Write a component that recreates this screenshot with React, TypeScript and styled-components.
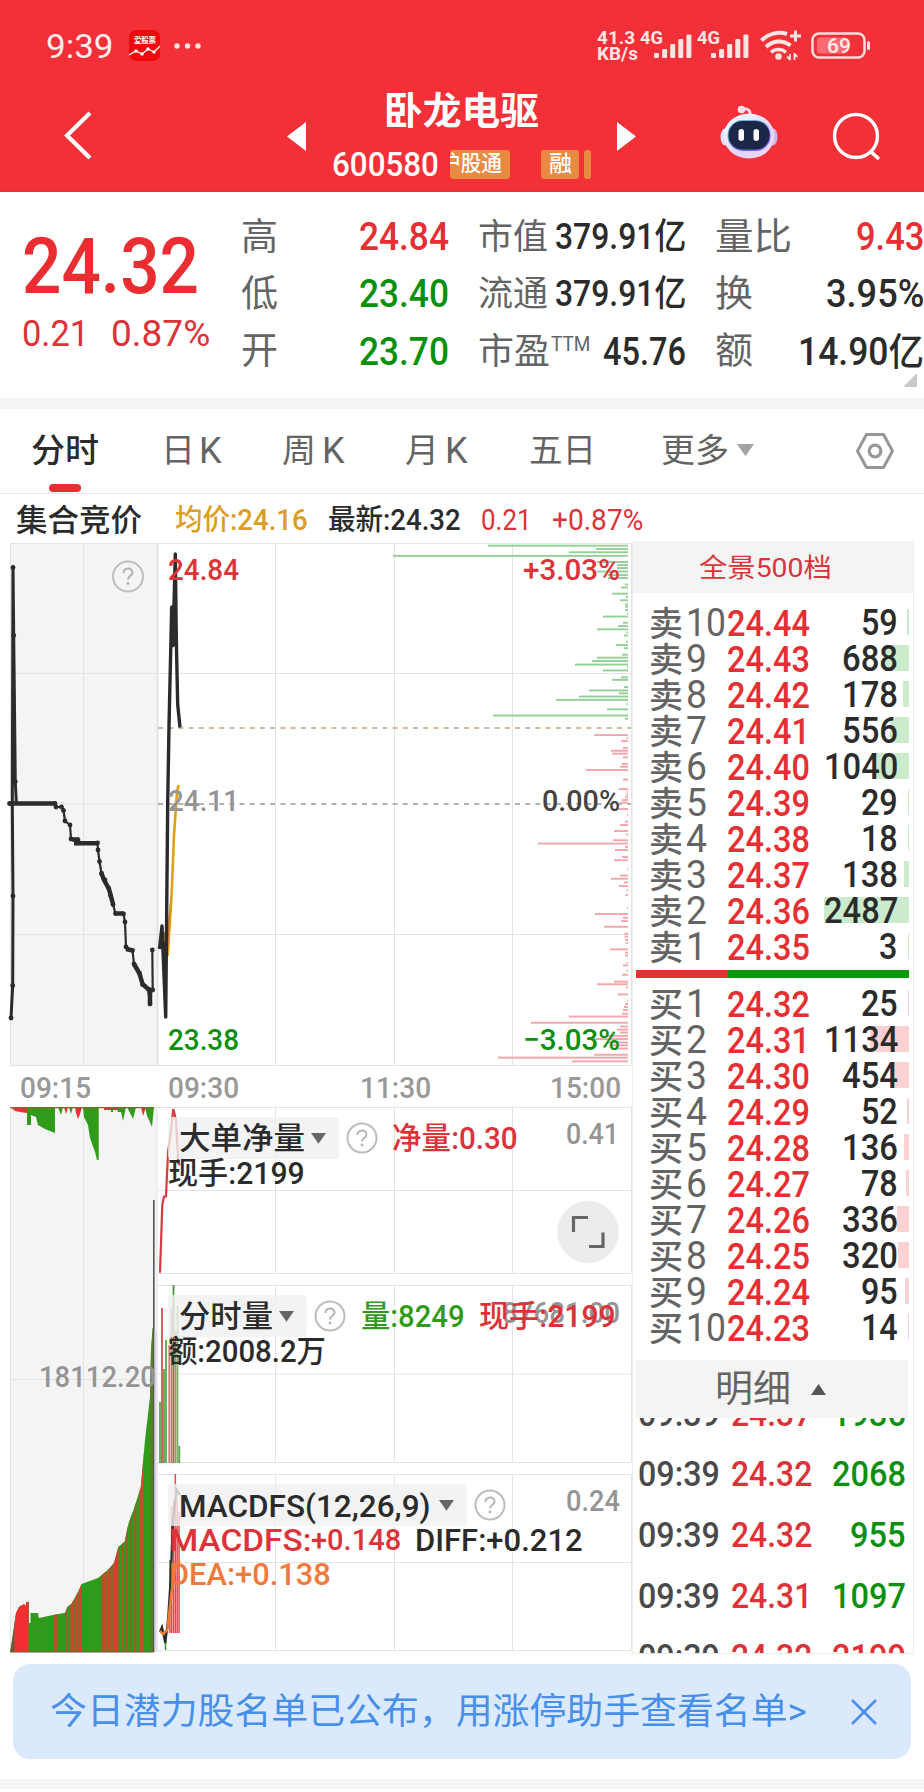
import React, { useLayoutEffect, useRef, useState } from 'react';
import styled, { createGlobalStyle } from 'styled-components';

const RED = '#e62e33';
const GREEN = '#0a900c';
const DARK = '#2b2b2b';
const GREY = '#646464';
const LIGHT = '#999';
const LINE = '#e3e3e3';
const FONT = `Roboto, "Noto Sans CJK SC", sans-serif`;

const Global = createGlobalStyle`
  * { box-sizing: border-box; }
  body { margin: 0; background: #fff; font-family: ${FONT}; overflow-x: hidden; }
  svg { display: block; flex: none; }
`;

/* ---------- text that is condensed to a given width ---------- */
interface TextStyle {
  $w: number;
  $size: number;
  $color?: string;
  $weight?: number;
  $ml?: number;
}
const FitBox = styled.span<TextStyle>`
  display: block;
  flex: none;
  width: ${p => p.$w}px;
  height: ${p => p.$size}px;
  margin-left: ${p => p.$ml ?? 0}px;
  font-size: ${p => p.$size}px;
  line-height: ${p => p.$size}px;
  color: ${p => p.$color ?? DARK};
  font-weight: ${p => p.$weight ?? 400};
`;
const FitInner = styled.span`
  display: block;
  width: max-content;
  white-space: nowrap;
  transform-origin: left center;
`;
interface FitProps {
  w: number;
  size: number;
  color?: string;
  weight?: number;
  ml?: number;
  children: React.ReactNode;
}
function Fit({ w, size, color, weight, ml, children }: FitProps) {
  const ref = useRef<HTMLSpanElement>(null);
  const [scale, setScale] = useState(1);
  useLayoutEffect(() => {
    if (ref.current) setScale(w / ref.current.offsetWidth);
  }, [w, children]);
  return (
    <FitBox $w={w} $size={size} $color={color} $weight={weight} $ml={ml}>
      <FitInner ref={ref} style={{ transform: `scaleX(${scale})` }}>{children}</FitInner>
    </FitBox>
  );
}

/* ---------- page ---------- */
const Page = styled.div`
  width: 924px;
  height: 1792px;
  overflow: hidden;
  background: #fff;
  display: flex;
  flex-direction: column;
`;

/* ---------- header ---------- */
const Header = styled.header`
  height: 192px;
  flex: none;
  background: #f32f38;
  border-bottom: 1px solid #d9343b;
`;
const StatusBar = styled.div`
  display: flex;
  align-items: center;
  height: 61px;
  padding: 30px 53px 0 46px;
`;
const StatusRight = styled.div`
  display: flex;
  align-items: center;
  margin-left: auto;
`;
const NetSpeed = styled.div`
  display: flex;
  flex-direction: column;
  > :last-child { margin-top: -2px; }
`;
const NavBar = styled.div`
  display: flex;
  align-items: center;
  height: 130px;
  padding-left: 62px;
`;
const TitleBlock = styled.div`
  display: flex;
  flex-direction: column;
  width: 260px;
  height: 118px;
  margin-left: 26px;
  padding-top: 25px;
`;
const CodeRow = styled.div`
  display: flex;
  align-items: center;
  height: 30px;
  margin-top: 19px;
`;
const Tag = styled.span<{ $w: number; $ml: number; $end?: boolean }>`
  display: flex;
  align-items: center;
  justify-content: ${p => (p.$end ? 'flex-end' : 'center')};
  padding-right: ${p => (p.$end ? 8 : 0)}px;
  width: ${p => p.$w}px;
  height: 29px;
  margin-left: ${p => p.$ml}px;
  border-radius: 3px;
  overflow: hidden;
  background: #e98a43;
  flex: none;
`;

function AppIcon() {
  return (
    <svg width="31" height="31" viewBox="0 0 31 31" style={{ marginLeft: 15 }}>
      <rect width="31" height="31" rx="7" fill="#ee0a0c" />
      <text x="5" y="12.5" fontSize="7.5" fontWeight="700" fill="#fff" textLength="22">爱股票</text>
      <path d="M0 25 L7 21 L13 24 L19 19 L25 22 L31 16" fill="none" stroke="#fff" strokeWidth="1.3" />
      {[[7, 21], [13, 24], [19, 19], [25, 22]].map(([x, y]) => <circle key={x} cx={x} cy={y} r="1.7" fill="#fff" />)}
    </svg>
  );
}
function Signal() {
  return (
    <svg width="52" height="31" viewBox="0 0 52 31" fill="#ffe4e4">
      <text x="0" y="13.5" fontSize="17.5" fontWeight="700" textLength="23" lengthAdjust="spacingAndGlyphs">4G</text>
      {[5, 9, 14, 19, 23.5].map((h, i) => <rect key={i} x={14 + i * 8.1} y={28 - h} width="5" height={h} rx="1.2" />)}
    </svg>
  );
}
function Wifi() {
  return (
    <svg width="44" height="31" viewBox="0 0 44 31" fill="none" stroke="#ffe4e4" strokeWidth="4">
      <path d="M2.5 10.5 A25 25 0 0 1 28 4" />
      <path d="M7 17 A18 18 0 0 1 31.500 15.500" />
      <path d="M12 22.500 A11 11 0 0 1 27 22.500" strokeWidth="3.600" />
      <circle cx="19.500" cy="26.500" r="3.300" fill="#ffe4e4" stroke="none" />
      <path d="M31 6 H42 M36.500 0.500 V11.500" strokeWidth="3" />
      <path d="M31 24 V30 M35.500 30 V23 M31.500 30 L28 26.500 M35 23.500 L38.500 27" strokeWidth="1.800" />
    </svg>
  );
}
function Battery() {
  return (
    <svg width="60" height="31" viewBox="0 0 60 31">
      <rect x="1.500" y="3.500" width="52" height="24" rx="6.500" fill="none" stroke="#ffdede" strokeWidth="2.500" />
      <rect x="6" y="7.500" width="30" height="16" rx="3" fill="#ff6a72" />
      <rect x="56" y="11" width="3" height="9" rx="1.500" fill="#ffdede" />
      <text x="16" y="23" fontSize="21" fontWeight="500" fill="#ffecec" textLength="24" lengthAdjust="spacingAndGlyphs">69</text>
    </svg>
  );
}
function Robot() {
  return (
    <svg width="58" height="54" viewBox="0 0 58 54" style={{ marginLeft: 84, marginTop: 11 }}>
      <defs>
        <linearGradient id="shell" x1="0" y1="0" x2="1" y2="1">
          <stop offset="0" stopColor="#fff" />
          <stop offset="0.600" stopColor="#ded6fb" />
          <stop offset="1" stopColor="#f6d8ec" />
        </linearGradient>
        <linearGradient id="rim" x1="0" y1="0" x2="1" y2="1">
          <stop offset="0" stopColor="#5fd8e0" />
          <stop offset="1" stopColor="#7a3ee6" />
        </linearGradient>
      </defs>
      <path d="M21 5 C27 2 31 5 30 11" fill="none" stroke="#f3d9ea" strokeWidth="2.800" />
      <circle cx="21.500" cy="4.500" r="3.800" fill="#f8dfea" />
      <ellipse cx="5" cy="32" rx="4.500" ry="8.500" fill="#dfe0fb" />
      <ellipse cx="53" cy="32" rx="4.500" ry="8.500" fill="#c9b8f5" />
      <ellipse cx="29" cy="31" rx="25.500" ry="22.500" fill="url(#shell)" />
      <rect x="7.500" y="15" width="43" height="31" rx="15" fill="url(#rim)" />
      <rect x="8.500" y="16" width="41" height="28.500" rx="14" fill="#1c2747" />
      <rect x="18.500" y="24" width="5.500" height="12" rx="2.700" fill="#fff" />
      <rect x="33.500" y="24" width="5.500" height="12" rx="2.700" fill="#fff" />
    </svg>
  );
}

/* ---------- quote summary ---------- */
const Quote = styled.section`
  display: flex;
  height: 206px;
  flex: none;
  position: relative;
`;
const MainPrice = styled.div`
  width: 241px;
  padding: 36px 0 0 22px;
`;
const ChangeRow = styled.div`
  display: flex;
  margin-top: 9px;
`;
const StatTable = styled.div`
  display: flex;
  gap: 29px;
`;
const StatCol = styled.div<{ $w: number }>`
  width: ${p => p.$w}px;
  padding-top: 16.500px;
`;
const StatRow = styled.div`
  display: flex;
  align-items: center;
  justify-content: space-between;
  height: 57.3px;
`;
const Label = styled.div`
  display: flex;
`;
const Strip = styled.div<{ $h: number }>`
  height: ${p => p.$h}px;
  flex: none;
  background: #f4f4f4;
`;
const Corner = styled.svg`
  position: absolute;
  right: 7px;
  bottom: 11px;
`;

/* ---------- tabs ---------- */
const Tabs = styled.nav`
  display: grid;
  grid-template-columns: 130px 121px 123px 124px 132px 195px 99px;
  height: 85px;
  flex: none;
  padding-left: 31px;
  border-bottom: 1px solid #e9e9ec;
`;
const Tab = styled.div`
  position: relative;
  display: flex;
  align-items: center;
  height: 83px;
`;
const Underline = styled.i`
  position: absolute;
  left: 18px;
  bottom: 0;
  width: 32px;
  height: 8px;
  border-radius: 4px;
  background: ${RED};
`;
const InfoRow = styled.div`
  display: flex;
  align-items: center;
  height: 47px;
  flex: none;
  padding: 5px 0 0 16px;
`;

/* ---------- body ---------- */
const Body = styled.main`
  display: flex;
  height: 1113px;
  flex: none;
`;
const ChartColumn = styled.div`
  width: 632px;
`;
const TimeAxis = styled.div`
  display: flex;
  align-items: center;
  height: 40px;
  padding: 2px 0 0 20px;
`;
const Lower = styled.div`
  display: flex;
`;
const Panel = styled.div`
  position: relative;
`;
const PanelHead = styled.div`
  position: absolute;
  left: 10px;
  top: 10px;
`;
const HeadRow = styled.div<{ $h: number }>`
  display: flex;
  align-items: center;
  height: ${p => p.$h}px;
`;
const Picker = styled.button<{ $w: number }>`
  display: flex;
  align-items: center;
  justify-content: space-between;
  width: ${p => p.$w}px;
  height: 42px;
  padding: 1px 13px 0 11px;
  border: 0;
  border-radius: 4px;
  background: rgba(240, 240, 240, 0.8);
  font-family: inherit;
  flex: none;
`;
const FullButton = styled.button`
  position: absolute;
  left: 399px;
  top: 94px;
  width: 62px;
  height: 62px;
  border: 0;
  border-radius: 50%;
  background: #ececec;
  display: grid;
  place-items: center;
  padding: 0;
`;

const Down = ({ size = 15, color = '#666' }) => (
  <svg width={size} height={size * 0.72} viewBox="0 0 15 10.800"><path d="M0 0 H15 L7.500 10.800 Z" fill={color} /></svg>
);
const Help = ({ ml = 7 }) => (
  <svg width="32" height="32" viewBox="0 0 32 32" style={{ marginLeft: ml }}>
    <circle cx="16" cy="16" r="14.500" fill="none" stroke="#bdbdbd" strokeWidth="2" />
    <path d="M11.500 13 C11.500 7 20.500 7 20.500 12.500 C20.500 16 16 15.500 16 19.500" fill="none" stroke="#b5b5b5" strokeWidth="2" />
    <circle cx="16" cy="23" r="1.400" fill="#b5b5b5" />
  </svg>
);

interface ChartTextProps { x: number; cy: number; w: number; size?: number; fill: string; weight?: number; children: string }
const ChartText = ({ x, cy, w, size = 30, fill, weight = 500, children }: ChartTextProps) => (
  <text x={x} y={cy + size * 0.355} fontSize={size} fontWeight={weight} fill={fill} textLength={w} lengthAdjust="spacingAndGlyphs">{children}</text>
);

/* order depth at the right edge of the price chart: [y, length] */
const SELL_DEPTH = [[545.600, 140], [549, 32], [552.200, 59], [555.800, 235], [562, 31], [565, 11], [568, 11], [571.500, 31], [575, 20], [578, 20], [584.500, 3], [587.500, 7], [593.600, 16], [597, 2], [600.200, 8], [604.500, 3], [606.700, 3], [610, 3], [613.600, 1], [616.500, 25], [622.700, 5], [626, 10], [629.300, 31], [632.500, 1.500], [635.500, 4], [641.600, 2], [645, 12], [648.200, 4], [654.700, 6], [657.600, 31], [661, 36], [664.500, 53], [667, 1], [670.400, 25], [677.300, 7], [679.800, 16], [687, 4], [690.400, 39], [693.300, 9], [696.500, 49], [699.800, 72], [704.200, 1.500], [709.300, 21], [715.500, 135], [718.700, 3]];
const BUY_DEPTH = [[735, 34], [738, 1.500], [741, 7], [747.800, 5], [750.700, 17], [753.600, 16], [757.300, 5], [763.800, 6], [766.700, 8], [770, 42], [779.500, 5], [789, 9], [791.800, 1.500], [794.700, 2], [797.300, 3], [800, 6], [802.700, 8], [809, 10], [814.700, 1], [821.600, 3], [825, 8], [831, 14], [834.400, 2], [840.200, 15], [843.500, 90], [847, 3], [850, 13], [857, 6], [860.200, 14], [869, 1], [875.500, 8], [878.700, 17], [882.400, 4], [886, 9], [890, 1.500], [895, 2.500], [908, 1], [914, 33], [917.600, 5], [921, 7], [926.700, 24], [933.600, 3.500], [936.500, 3.500], [939.800, 3], [943, 2], [949.300, 18], [952.500, 3], [955.500, 3], [962.700, 1.500], [965.300, 5], [970.700, 1.500], [974.700, 6], [981.600, 14], [984.200, 31], [987.500, 2], [994.400, 10], [1000.500, 1], [1003.800, 3], [1007, 4], [1010, 5], [1013.600, 6], [1016.500, 59], [1022.700, 97], [1026.400, 8], [1029.600, 11], [1032.500, 8], [1035.800, 21], [1039, 34], [1042.400, 21], [1045.300, 16], [1048.500, 10], [1054.700, 34], [1057.600, 130], [1061.300, 56]];

const AUCTION: [number, number][] = [[9.500, 803.500], [55, 803.500], [56, 807], [61.500, 807], [63.500, 810.500], [65, 821], [70, 825], [71, 839], [78, 840], [78, 843], [97.500, 843], [98, 850], [99.500, 861.500], [101.500, 873.500], [105, 880], [108.500, 888], [110.500, 895.500], [113, 904.500], [115.500, 913.500], [123.500, 914], [125, 922], [126, 947], [132.500, 950.500], [134, 964], [139.500, 973.500], [142.500, 984.500], [148, 989], [150, 1004], [150.500, 990], [152.700, 990], [152.300, 950]];
const SPIKE: [number, number][] = [[11, 1018], [12.700, 985.600], [13, 896], [12.300, 803], [13, 567.500], [13.700, 635.500], [15.300, 781.600], [16.300, 803]];
const toPoints = (pts: [number, number][]) => pts.map(p => p.join(',')).join(' ');

function PriceChart() {
  return (
    <svg width="632" height="526" viewBox="0 541 632 526">
      <rect x="10" y="543" width="147" height="522" fill="#f4f4f4" />
      <g stroke={LINE} strokeWidth="1">
        <path d="M10 543.500 H631 M10 673.500 H631 M10 804 H157 M10 934.500 H631 M10 1065.500 H631" fill="none" />
        <path d="M10.500 543 V1065 M83.500 543 V1065 M275.500 543 V1065 M394.500 543 V1065 M512.500 543 V1065 M631.500 543 V1065" fill="none" />
        <path d="M157.500 543 V1065" strokeWidth="2" />
      </g>
      <path d="M158 728 H631" stroke="#bfa57c" strokeWidth="1.500" strokeDasharray="5 5.200" />
      <path d="M158 804 H631" stroke="#999" strokeWidth="1.500" strokeDasharray="5 5.200" />
      {SELL_DEPTH.map(([y, w]) => <rect key={y} x={628 - w} y={y - 0.900} width={w} height="1.900" fill="#93cf96" />)}
      {BUY_DEPTH.map(([y, w]) => <rect key={y} x={628 - w} y={y - 0.900} width={w} height="1.900" fill="#f3a5aa" />)}
      <g fill="none" stroke={DARK} strokeLinejoin="round">
        <polyline points={toPoints(SPIKE)} strokeWidth="3" />
        <polyline points={toPoints(AUCTION)} strokeWidth="2.200" />
        <path d="M9 803.500 H55 M72 839.500 H79 M74 843.200 H97.500 M115 913.500 H124 M126 949 L133 950.500 M134 964 L139.500 973.500 L142.500 984 L147 988 M101 872 L104 880 L109 889 L113 904 M150 989 V1004" strokeWidth="4.500" />
      </g>
      {[...SPIKE.filter(p => p[1] !== 803), ...AUCTION].map(([x, y], i) => <circle key={i} cx={x} cy={y} r="2.400" fill={DARK} />)}
      <path d="M160.500 948 L163.300 932 L167.700 956 L171.700 893.500 L174 835.500 L177 792 L178.700 785" fill="none" stroke="#e0a013" strokeWidth="2.600" />
      <path d="M163.500 932 L168 956 L171 893 L166.500 935 Z" fill="#c9861d" />
      <path d="M159.500 949 L162 926 L165.700 1017 L167.700 803 L169 726 L171.700 607 L173 645.500 L175.300 554 L176.300 639 L177.700 704.500 L180 727.500" fill="none" stroke={DARK} strokeWidth="3.400" strokeLinejoin="round" />
      <path d="M171 608 L177 600 L176.500 636 L172 640 Z M162 940 L167 945 L166 1016 Z" fill={DARK} />
      <circle cx="128" cy="576.500" r="15" fill="none" stroke="#bdbdbd" strokeWidth="2" />
      <path d="M123.500 573 C123.500 567 132.500 567 132.500 572.500 C132.500 576 128 575.500 128 579.500" fill="none" stroke="#b0b0b0" strokeWidth="2" />
      <circle cx="128" cy="583.500" r="1.400" fill="#b0b0b0" />
      <ChartText x={168} cy={569} w={71} fill="#dc3238">24.84</ChartText>
      <ChartText x={168} cy={800} w={71} fill="#949494">24.11</ChartText>
      <ChartText x={168} cy={1039.500} w={71} fill={GREEN}>23.38</ChartText>
      <ChartText x={523} cy={569} w={97} fill="#dc3238">+3.03%</ChartText>
      <ChartText x={542} cy={800} w={78} fill="#444">0.00%</ChartText>
      <ChartText x={523} cy={1039.500} w={97} fill={GREEN}>−3.03%</ChartText>
    </svg>
  );
}

const VOLUME_AREA = 'M10 1652 L11 1647 L14 1627 L16 1613 L19 1607 L24 1604 L26 1606 L26 1602 L29 1602 L29 1623 L30.500 1623 L30.500 1613 L38 1613 L38.800 1618 L53 1615 L65.300 1612.700 L67.300 1606.700 L71.400 1604 L77.600 1593 L81.600 1584 L98 1578 L108 1570 L114 1563 L118.400 1546.700 L124.500 1541.700 L128.600 1523 L134.700 1506.700 L140.800 1486.700 L145 1440 L150 1396.700 L151 1350 L152.700 1328 L154 1328 L154 1652 Z';
const STRIPES: [number, number, string][] = [[10, 5, '#6d5a35'], [14.500, 14, '#f12f33'], [54, 3.500, '#b0522b'], [65, 2, '#9b5a2a'], [69, 9, '#8e6427'], [72, 1.500, '#c94a2c'], [76, 1.500, '#c94a2c'], [78.500, 3.500, '#e23a30'], [101, 13, '#8e6427'], [104, 1, '#c94a2c'], [108, 1, '#c94a2c'], [111, 1, '#c94a2c'], [114, 4.500, '#dc3c30'], [122, 1.500, '#a8552a'], [125.500, 2.500, '#a0582a'], [130.500, 1.500, '#8f5e29'], [134, 2.500, '#8e6427'], [139.500, 4, '#c94a2c'], [150, 3.500, '#547f22']];

function AuctionVolume() {
  return (
    <svg width="158" height="546" viewBox="0 1107 158 546">
      <rect x="10" y="1107" width="147" height="545" fill="#f4f4f4" />
      <path d="M10.500 1107 V1652 M83.500 1107 V1652 M10 1107.500 H157 M10 1379.500 H157 M157 1107 V1652" stroke={LINE} fill="none" />
      <path d="M10.500 1107 L15 1111 L20 1112 L27 1113 V1107 Z M64 1107 L66 1114 L68 1107 Z M75 1107 L76 1113 L78 1119 L80 1114 L82 1107 Z M104 1107 H119 V1110 H104 Z M141 1107 L143 1116 L146 1107 Z" fill={RED} />
      <path d="M27 1107 V1125 H31 V1115 L36 1117 L38 1125 L45 1129 L55 1133 V1107 Z M58 1107 L61 1115 L63 1107 Z M69 1107 L71 1114 L73 1107 Z M83 1107 L84 1117 L88 1125 L90 1138 L95 1152 L97 1160 H98.700 V1107 Z M111 1107 V1112 H113 V1107 Z M116 1107 L118 1112 L121 1112 L123 1121 L126 1107 Z M127 1107 L131 1115 L133 1119 L136 1107 Z M145 1107 L147 1116 L149 1120 L152 1127 L154 1107 Z" fill="#309b1b" />
      <path d="M10 1107.500 H154" stroke="#8d632c" strokeWidth="1.500" />
      <clipPath id="volume-area"><path d={VOLUME_AREA} /></clipPath>
      <path d={VOLUME_AREA} fill="#309b1b" />
      <g clipPath="url(#volume-area)">
        {STRIPES.map(([x, w, c], i) => <rect key={i} x={x} y="1300" width={w} height="352" fill={c} />)}
      </g>
      <path d="M153.800 1200 V1652" stroke="#555" strokeWidth="1.600" />
      <path d="M155.500 1330 V1652" stroke="#d9d6e8" strokeWidth="2" />
      <path d="M10 1652 H154" stroke="#7c5a2c" strokeWidth="1.200" />
      <ChartText x={39} cy={1376} w={117} fill="#949494">18112.20</ChartText>
    </svg>
  );
}

interface GridProps { top: number; bottom: number; mid: number; height: number; children: React.ReactNode }
const SubChart = ({ top, bottom, mid, height, children }: GridProps) => (
  <svg width="474" height={height} viewBox={`158 ${top} 474 ${height}`}>
    <path d={`M158 ${top + 0.5} H631 M158 ${mid} H631 M158 ${bottom} H631 M275.500 ${top} V${bottom} M394.500 ${top} V${bottom} M512.500 ${top} V${bottom} M631.500 ${top} V${bottom}`} stroke={LINE} fill="none" />
    {children}
  </svg>
);
const VOLUME_BARS: [number, number, string][] = [[160, 1402, '#58a84a'], [162, 1308, '#dd4a52'], [164, 1369, '#58a84a'], [166, 1340, '#58a84a'], [169.300, 1345, '#e2727a'], [171.500, 1309, '#dd6b72'], [173.500, 1285, '#499a3c'], [175.500, 1330, '#e2727a'], [177.500, 1306, '#6eb860'], [179.300, 1446, '#58a84a']];
const MACD_BARS: [number, number][] = [[170, 1560], [171.800, 1506], [173.700, 1500], [175.500, 1474], [177.300, 1500], [179.200, 1512]];

/* ---------- order book ---------- */
const Book = styled.aside`
  width: 281.500px;
  border: 1px solid #ececec;
  border-top: 0;
  overflow: hidden;
  display: flex;
  flex-direction: column;
`;
const BookTitle = styled.div`
  display: flex;
  align-items: center;
  justify-content: center;
  height: 52px;
  flex: none;
  background: #f4f4f4;
  padding: 2px 14px 0 0;
`;
const Levels = styled.div<{ $pt: number }>`
  padding: ${p => p.$pt}px 4px 0 16px;
`;
const Level = styled.div`
  position: relative;
  display: grid;
  grid-template-columns: 78px 84px 1fr;
  align-items: center;
  height: 36px;
`;
const Amount = styled.div`
  display: flex;
  justify-content: flex-end;
  padding-right: 10.500px;
  position: relative;
`;
const DepthBar = styled.i<{ $color: string }>`
  position: absolute;
  right: 0;
  top: 5px;
  height: 26px;
  background: ${p => p.$color};
`;
const Balance = styled.div`
  display: grid;
  grid-template-columns: 91.500px 1fr;
  height: 8.500px;
  margin: 5.500px 4px 0 3px;
  background: #0b990c;
  flex: none;
  &::before { content: ''; background: ${RED}; }
`;
const DetailBar = styled.div`
  display: flex;
  align-items: center;
  height: 58px;
  margin: 14.500px 5px 0 3px;
  padding: 2px 0 0 79px;
  background: #f4f4f4;
  flex: none;
`;
const Trades = styled.div`
  height: 235px;
  overflow: hidden;
  flex: none;
  display: flex;
  flex-direction: column;
  padding: 0 8px 0 5px;
`;
const Trade = styled.div`
  display: flex;
  align-items: center;
  height: 61px;
  flex: none;
  &:first-child { height: 58px; margin-top: -32px; }
`;

const SELLS = [59, 688, 178, 556, 1040, 29, 18, 138, 2487, 3];
const BUYS = [25, 1134, 454, 52, 136, 78, 336, 320, 95, 14];
const TRADES: [string, number, string][] = [['24.37', 1936, GREEN], ['24.32', 2068, GREEN], ['24.32', 955, GREEN], ['24.31', 1097, GREEN], ['24.32', 2199, RED]];

const LevelName = styled.div`
  display: flex;
  align-items: center;
`;
function LevelRow({ side, n, price, amount, bar }: { side: string; n: number; price: string; amount: number; bar: string }) {
  return (
    <Level>
      <DepthBar $color={bar} style={{ width: Math.round(amount * 0.0338 * 10) / 10 }} />
      <LevelName>
        <Fit w={34} size={34} color={GREY} weight={500}>{side}</Fit>
        <Fit w={n > 9 ? 40 : 21} size={39} color={GREY} ml={3}>{n}</Fit>
      </LevelName>
      <Fit w={83} size={36} color={RED} weight={500}>{price}</Fit>
      <Amount><Fit w={String(amount).length * 18.6} size={36.500} weight={500}>{amount}</Fit></Amount>
    </Level>
  );
}

const BannerWrap = styled.div`
  padding: 10px 13px 20px;
  flex: none;
`;
const Banner = styled.div`
  display: flex;
  align-items: center;
  height: 95px;
  padding: 1px 0 0 37px;
  border-radius: 17px;
  background: #dbe9fc;
`;

export default function App() {
  return (
    <Page>
      <Global />
      <Header>
        <StatusBar>
          <Fit w={68} size={34} color="#ffecec">9:39</Fit>
          <AppIcon />
          <svg width="30" height="8" viewBox="0 0 30 8" fill="#ffe4e4" style={{ marginLeft: 13 }}>
            <circle cx="4" cy="4" r="2.700" /><circle cx="14.500" cy="4" r="2.700" /><circle cx="25" cy="4" r="2.700" />
          </svg>
          <StatusRight>
            <NetSpeed>
              <Fit w={38} size={18} weight={700} color="#ffe4e4">41.3</Fit>
              <Fit w={41} size={18} weight={700} color="#ffe4e4">KB/s</Fit>
            </NetSpeed>
            <svg width="2" height="1" />
            <Signal />
            <svg width="5" height="1" />
            <Signal />
            <svg width="10" height="1" />
            <Wifi />
            <svg width="8" height="1" />
            <Battery />
          </StatusRight>
        </StatusBar>
        <NavBar>
          <svg width="30" height="50" viewBox="0 0 30 50" style={{ marginTop: 18 }}>
            <path d="M28 3 L5 25.500 L28 48" fill="none" stroke="#fff" strokeWidth="4.200" />
          </svg>
          <svg width="19" height="29" viewBox="0 0 19 29" style={{ marginLeft: 195, marginTop: 21 }}>
            <path d="M19 0 V29 L0 14.500 Z" fill="#fff" />
          </svg>
          <TitleBlock>
            <Fit w={155} size={38} color="#fff" weight={700} ml={52}>卧龙电驱</Fit>
            <CodeRow>
              <Fit w={107} size={34} color="#fff" weight={500}>600580</Fit>
              <Tag $w={60} $ml={11} $end><Fit w={62} size={22} color="#fff" weight={500}>沪股通</Fit></Tag>
              <Tag $w={38} $ml={31}><Fit w={23} size={22} color="#fff" weight={500}>融</Fit></Tag>
              <Tag $w={7} $ml={5} />
            </CodeRow>
          </TitleBlock>
          <svg width="19" height="29" viewBox="0 0 19 29" style={{ marginLeft: 25, marginTop: 20 }}>
            <path d="M0 0 V29 L19 14.500 Z" fill="#fff" />
          </svg>
          <Robot />
          <svg width="50" height="50" viewBox="0 0 50 50" style={{ marginLeft: 54, marginTop: 21 }}>
            <circle cx="24" cy="24" r="21.500" fill="none" stroke="#fff" strokeWidth="3.400" />
            <path d="M38 39 L47 47" stroke="#fff" strokeWidth="3.600" />
          </svg>
        </NavBar>
      </Header>

      <Quote>
        <MainPrice>
          <Fit w={177} size={78} color="#ea2d31" weight={500}>24.32</Fit>
          <ChangeRow>
            <Fit w={67} size={37} color="#dc3238">0.21</Fit>
            <Fit w={99} size={37} color="#dc3238" ml={22}>0.87%</Fit>
          </ChangeRow>
        </MainPrice>
        <StatTable>
          <StatCol $w={208}>
            {[['高', '24.84', RED], ['低', '23.40', GREEN], ['开', '23.70', GREEN]].map(([a, b, c]) => (
              <StatRow key={a}>
                <Fit w={37} size={37} color={GREY}>{a}</Fit>
                <Fit w={90} size={38} color={c} weight={500}>{b}</Fit>
              </StatRow>
            ))}
          </StatCol>
          <StatCol $w={208}>
            <StatRow><Fit w={70} size={35} color={GREY}>市值</Fit><Fit w={131} size={36} weight={500}>379.91亿</Fit></StatRow>
            <StatRow><Fit w={70} size={35} color={GREY}>流通</Fit><Fit w={131} size={36} weight={500}>379.91亿</Fit></StatRow>
            <StatRow>
              <Label><Fit w={72} size={36} color={GREY}>市盈</Fit><Fit w={39} size={20} color={GREY} ml={1}>TTM</Fit></Label>
              <Fit w={83} size={38} weight={500}>45.76</Fit>
            </StatRow>
          </StatCol>
          <StatCol $w={208.5}>
            <StatRow><Fit w={77} size={37} color={GREY}>量比</Fit><Fit w={68} size={38} color={RED} weight={500}>9.43</Fit></StatRow>
            <StatRow><Fit w={38} size={37} color={GREY}>换</Fit><Fit w={98} size={38} weight={500}>3.95%</Fit></StatRow>
            <StatRow><Fit w={38} size={37} color={GREY}>额</Fit><Fit w={126} size={38} weight={500}>14.90亿</Fit></StatRow>
          </StatCol>
        </StatTable>
        <Corner width="14" height="14" viewBox="0 0 14 14"><path d="M14 0 V14 H0 Z" fill="#c9c9c9" /></Corner>
      </Quote>
      <Strip $h={11} />

      <Tabs>
        <Tab><Fit w={68} size={33} weight={500}>分时</Fit><Underline /></Tab>
        <Tab><Fit w={34} size={33} color={GREY}>日</Fit><Fit w={23} size={36} color={GREY} ml={4}>K</Fit></Tab>
        <Tab><Fit w={34} size={33} color={GREY}>周</Fit><Fit w={23} size={36} color={GREY} ml={6}>K</Fit></Tab>
        <Tab><Fit w={34} size={33} color={GREY}>月</Fit><Fit w={23} size={36} color={GREY} ml={6}>K</Fit></Tab>
        <Tab><Fit w={67} size={33} color={GREY}>五日</Fit></Tab>
        <Tab><Fit w={68} size={33} color={GREY}>更多</Fit><svg width="8" height="1" /><Down size={17} color="#a3a3a3" /></Tab>
        <Tab>
          <svg width="40" height="38" viewBox="0 0 40 38" fill="none" stroke="#979797" style={{ marginLeft: -1 }}>
            <path d="M11.500 2.500 H28.500 L37.500 19 L28.500 35.500 H11.500 L2.500 19 Z" strokeWidth="3" strokeLinejoin="round" />
            <circle cx="20" cy="19" r="5.800" strokeWidth="3.200" />
          </svg>
        </Tab>
      </Tabs>

      <InfoRow>
        <Fit w={126} size={31} weight={500}>集合竞价</Fit>
        <Fit w={133} size={29} weight={500} color="#dd9d1f" ml={33}>均价:24.16</Fit>
        <Fit w={133} size={29} weight={500} ml={20}>最新:24.32</Fit>
        <Fit w={51} size={29} color="#dc3238" ml={20}>0.21</Fit>
        <Fit w={91} size={29} color="#dc3238" ml={20}>+0.87%</Fit>
      </InfoRow>

      <Body>
        <ChartColumn>
          <PriceChart />
          <TimeAxis>
            <Fit w={71} size={30} color={LIGHT} weight={500}>09:15</Fit>
            <Fit w={71} size={30} color={LIGHT} weight={500} ml={77}>09:30</Fit>
            <Fit w={71} size={30} color={LIGHT} weight={500} ml={121}>11:30</Fit>
            <Fit w={71} size={30} color={LIGHT} weight={500} ml={119}>15:00</Fit>
          </TimeAxis>
          <Lower>
            <AuctionVolume />
            <div>
              <Panel>
                <SubChart top={1107} bottom={1273.5} mid={1190.5} height={178}>
                  <path d="M160 1272.700 L162.300 1205 L164 1196.500 L166 1196.500 L168 1153 L170.700 1133 L173.300 1109 L176 1120 L178.300 1163 L180 1165" fill="none" stroke="#d93a40" strokeWidth="2.200" />
                  <ChartText x={566} cy={1133.500} w={53} fill="#949494">0.41</ChartText>
                </SubChart>
                <PanelHead>
                  <HeadRow $h={42}>
                    <Picker $w={171}><Fit w={126} size={31} weight={500}>大单净量</Fit><Down /></Picker>
                    <Help />
                    <Fit w={126} size={31} weight={500} color="#dc3238" ml={14}>净量:0.30</Fit>
                  </HeadRow>
                  <HeadRow $h={29}><Fit w={137} size={31} weight={500}>现手:2199</Fit></HeadRow>
                </PanelHead>
                <FullButton>
                  <svg width="34" height="34" viewBox="0 0 34 34" fill="none" stroke="#666" strokeWidth="3.200">
                    <path d="M2.500 17 V2.500 H17 M32 17.500 V31.500 H18" />
                  </svg>
                </FullButton>
              </Panel>
              <Panel>
                <SubChart top={1285} bottom={1462.5} mid={1374} height={189}>
                  {VOLUME_BARS.map(([x, y, c]) => <rect key={x} x={x - 0.9} y={y} width="1.800" height={1463 - y} fill={c} />)}
                  <ChartText x={502} cy={1312} w={118} fill="#949494">87681.00</ChartText>
                </SubChart>
                <PanelHead>
                  <HeadRow $h={42}>
                    <Picker $w={139}><Fit w={94} size={31} weight={500}>分时量</Fit><Down /></Picker>
                    <Help />
                    <Fit w={104} size={31} weight={500} color="#309b1b" ml={15}>量:8249</Fit>
                    <Fit w={137} size={31} weight={500} color="#dc3238" ml={14}>现手:2199</Fit>
                  </HeadRow>
                  <HeadRow $h={29}><Fit w={158} size={31} weight={500}>额:2008.2万</Fit></HeadRow>
                </PanelHead>
              </Panel>
              <Panel>
                <SubChart top={1474} bottom={1650.5} mid={1562.5} height={179}>
                  {MACD_BARS.map(([x, y]) => <rect key={x} x={x - 0.9} y={y} width="1.500" height={1633 - y} fill="#f0404c" />)}
                  <path d="M165.500 1632 V1650" stroke="#309b1b" strokeWidth="1.500" />
                  <path d="M160 1632 L162 1627 L165.300 1643 L168 1620 L170.600 1580 L173 1520 L176.700 1490 L180 1495" fill="none" stroke={DARK} strokeWidth="2.200" />
                  <path d="M160 1631 L163 1634 L167.400 1630 L171.400 1593 L175.500 1566 L179.600 1560" fill="none" stroke="#f07a3a" strokeWidth="2.400" />
                  <ChartText x={566} cy={1500.500} w={54} fill="#949494">0.24</ChartText>
                </SubChart>
                <PanelHead>
                  <HeadRow $h={42}>
                    <Picker $w={299}><Fit w={252} size={32} weight={500}>MACDFS(12,26,9)</Fit><Down /></Picker>
                    <Help />
                  </HeadRow>
                  <HeadRow $h={28}>
                    <Fit w={142} size={32} weight={500} color="#dc3238" ml={1}>MACDFS:</Fit>
                    <Fit w={90} size={30} color="#dc3238" weight={500}>+0.148</Fit>
                    <Fit w={168} size={31} weight={500} ml={14}>DIFF:+0.212</Fit>
                  </HeadRow>
                  <HeadRow $h={40}><Fit w={162} size={31} weight={500} color="#f0793c" ml={1}>DEA:+0.138</Fit></HeadRow>
                </PanelHead>
              </Panel>
            </div>
          </Lower>
        </ChartColumn>

        <Book>
          <BookTitle><Fit w={133} size={26} color="#d9343a">全景500档</Fit></BookTitle>
          <Levels $pt={11}>
            {SELLS.map((v, i) => <LevelRow key={i} side="卖" n={10 - i} price={(24.44 - i * 0.01).toFixed(2)} amount={v} bar="#cbebcd" />)}
          </Levels>
          <Balance />
          <Levels $pt={7}>
            {BUYS.map((v, i) => <LevelRow key={i} side="买" n={i + 1} price={(24.32 - i * 0.01).toFixed(2)} amount={v} bar="#fbd2d4" />)}
          </Levels>
          <DetailBar>
            <Fit w={76} size={37} color={GREY}>明细</Fit>
            <svg width="15" height="11" viewBox="0 0 15 11" style={{ marginLeft: 20 }}><path d="M0 11 H15 L7.500 0 Z" fill="#555" /></svg>
          </DetailBar>
          <Trades>
            {TRADES.map(([p, v, c], i) => (
              <Trade key={i}>
                <Fit w={82} size={35} weight={500} color="#4a4a4a">09:39</Fit>
                <Fit w={81} size={35} weight={500} color="#dc3238" ml={11}>{p}</Fit>
                <Fit w={String(v).length * 18.6} size={35} weight={500} color={c} ml={268 - 174 - String(v).length * 18.6}>{v}</Fit>
              </Trade>
            ))}
          </Trades>
        </Book>
      </Body>

      <BannerWrap>
        <Banner>
          <Fit w={757} size={36} color="#478fe8">今日潜力股名单已公布，用涨停助手查看名单&gt;</Fit>
          <svg width="26" height="26" viewBox="0 0 26 26" style={{ marginLeft: 44 }}>
            <path d="M1 1 L25 25 M25 1 L1 25" stroke="#478fe8" strokeWidth="2.600" />
          </svg>
        </Banner>
      </BannerWrap>
      <Strip $h={10} />
    </Page>
  );
}
